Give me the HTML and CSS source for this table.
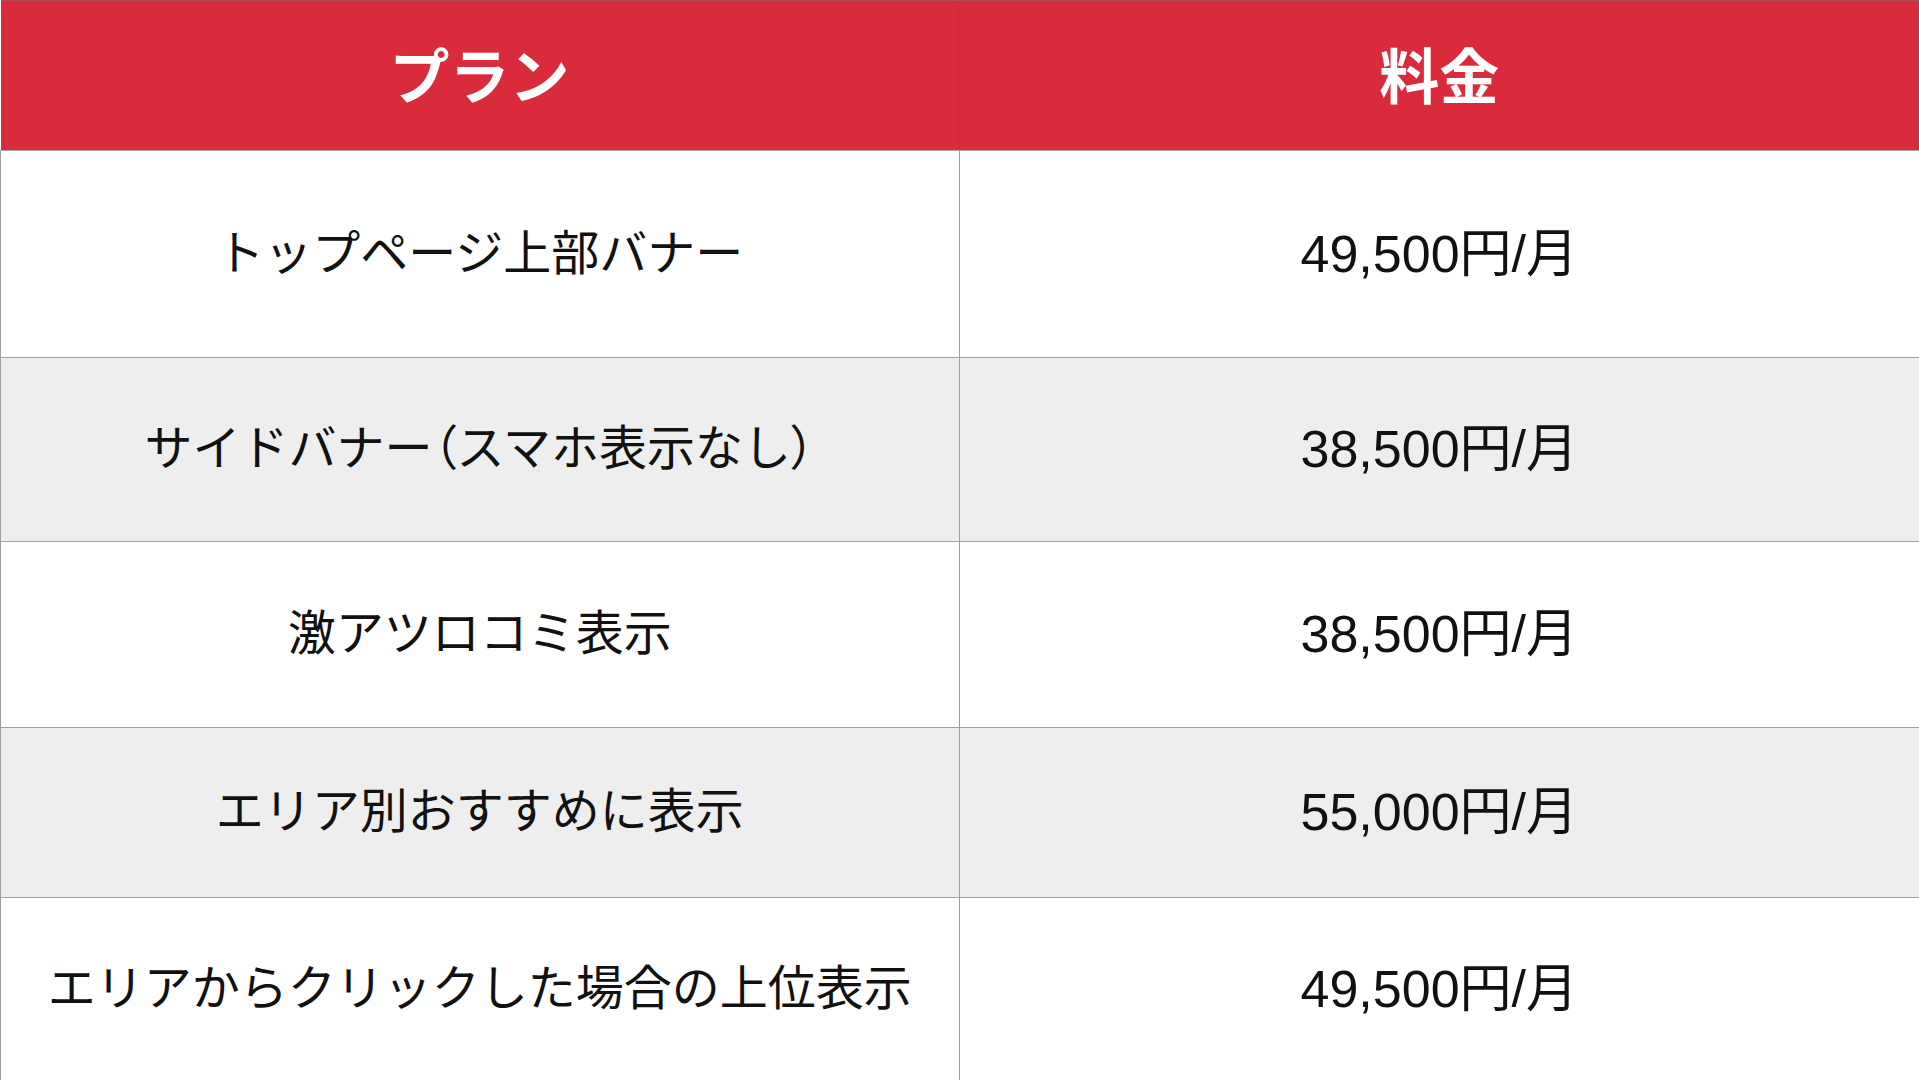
FILE: index.html
```html
<!DOCTYPE html>
<html lang="ja">
<head>
<meta charset="utf-8">
<title>料金表</title>
<link rel="stylesheet" href="styles.css">
</head>
<body>
<table class="price-table">
  <thead>
    <tr class="head-row">
      <th class="col-plan">プラン</th>
      <th class="col-price">料金</th>
    </tr>
  </thead>
  <tbody>
    <tr class="row row-1">
      <td>トップページ上部バナー</td>
      <td>49,500円/月</td>
    </tr>
    <tr class="row row-2 alt">
      <td>サイドバナー<span class="paren">（</span>スマホ表示なし<span class="paren">）</span></td>
      <td>38,500円/月</td>
    </tr>
    <tr class="row row-3">
      <td>激アツロコミ表示</td>
      <td>38,500円/月</td>
    </tr>
    <tr class="row row-4 alt">
      <td>エリア別おすすめに表示</td>
      <td>55,000円/月</td>
    </tr>
    <tr class="row row-5">
      <td>エリアからクリックした場合の上位表示</td>
      <td>49,500円/月</td>
    </tr>
  </tbody>
</table>
</body>
</html>
```

FILE: styles.css
```css
html, body {
  margin: 0;
  padding: 0;
  overflow: hidden;
  background: #ffffff;
}

.price-table {
  width: 1919px;
  border-collapse: collapse;
  table-layout: fixed;
  font-family: "Liberation Sans", "Noto Sans CJK JP", sans-serif;
  color: #111111;
}

.col-plan {
  width: 958px;
}

.head-row {
  height: 150px;
  background: #d92b3b;
}

.head-row th {
  color: #ffffff;
  font-family: "Noto Sans CJK JP", sans-serif;
  font-weight: 700;
  font-size: 60px;
  line-height: 1;
  text-align: center;
  vertical-align: middle;
  padding: 0 0 6px 0;
  border-top: 1px solid #b04a55;
  border-bottom: 1px solid #a5a5a5;
}

.head-row th + th {
  border-left: 1px solid #c0303e;
}

.row td {
  font-size: 48px;
  line-height: 1;
  text-align: center;
  vertical-align: middle;
  padding: 0 0 1px 0;
  border: 1px solid #a0a0a0;
  border-right: none;
}

.row td + td {
  font-size: 52px;
}

.paren {
  font-feature-settings: "palt";
}

.row.alt {
  background: #eeeeee;
}

.row-1 { height: 207px; }
.row-2 { height: 184px; }
.row-3 { height: 186px; }
.row-4 { height: 170px; }
.row-5 { height: 183px; }

.row-5 td {
  border-bottom: none;
}
```
